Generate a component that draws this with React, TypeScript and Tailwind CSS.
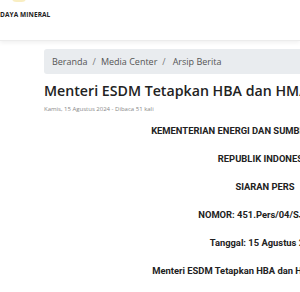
export default function App() {
  const sans = { fontFamily: '"Open Sans", "Liberation Sans", sans-serif' };
  const rob = { fontFamily: 'Roboto, "Liberation Sans", sans-serif' };
  return (
    <div className="w-[300px] h-[292px] overflow-hidden bg-white relative">
      <header className="h-[41px] bg-white relative shadow-[0_2px_4px_rgba(0,0,0,0.06)] border-b border-[#ececec]">
        <div className="absolute left-[12px] top-[-6px] w-[14px] h-[8px] rounded-full bg-[#f6e7a8] opacity-70" />
        <div className="pt-[10px] text-[6.5px] font-bold text-[#222] tracking-[0.1px]" style={sans}>DAYA MINERAL</div>
      </header>
      <div className="pl-[44px] pt-[8px] w-[486px]">
        <div className="h-[25px] bg-[#e9ecef] rounded-[3px] flex items-center pl-[8px] text-[9px] text-[#555]" style={sans}>
          <span>Beranda</span>
          <span className="mx-[5px] text-[#777]">/</span>
          <span>Media Center</span>
          <span className="mx-[5px] text-[#777]">/</span>
          <span className="ml-[2px]">Arsip Berita</span>
        </div>
        <h1 className="mt-[7px] text-[14.2px] leading-[20px] font-semibold text-[#222] whitespace-nowrap" style={sans}>
          Menteri ESDM Tetapkan HBA dan HMA Agustus 2024
        </h1>
        <div className="mt-[4px] text-[6px] text-[#888]" style={sans}>Kamis, 15 Agustus 2024 - Dibaca 51 kali</div>
        <div className="mt-[10px] flex flex-col items-center gap-[14px] text-[9.4px] font-bold text-[#222] leading-[14px] whitespace-nowrap" style={rob}>
          <p>KEMENTERIAN ENERGI DAN SUMBER DAYA MINERAL</p>
          <p>REPUBLIK INDONESIA</p>
          <p>SIARAN PERS</p>
          <p>NOMOR: 451.Pers/04/SJI/2024</p>
          <p>Tanggal: 15 Agustus 2024</p>
          <p>Menteri ESDM Tetapkan HBA dan HMA Agustus 2024</p>
        </div>
      </div>
    </div>
  );
}
